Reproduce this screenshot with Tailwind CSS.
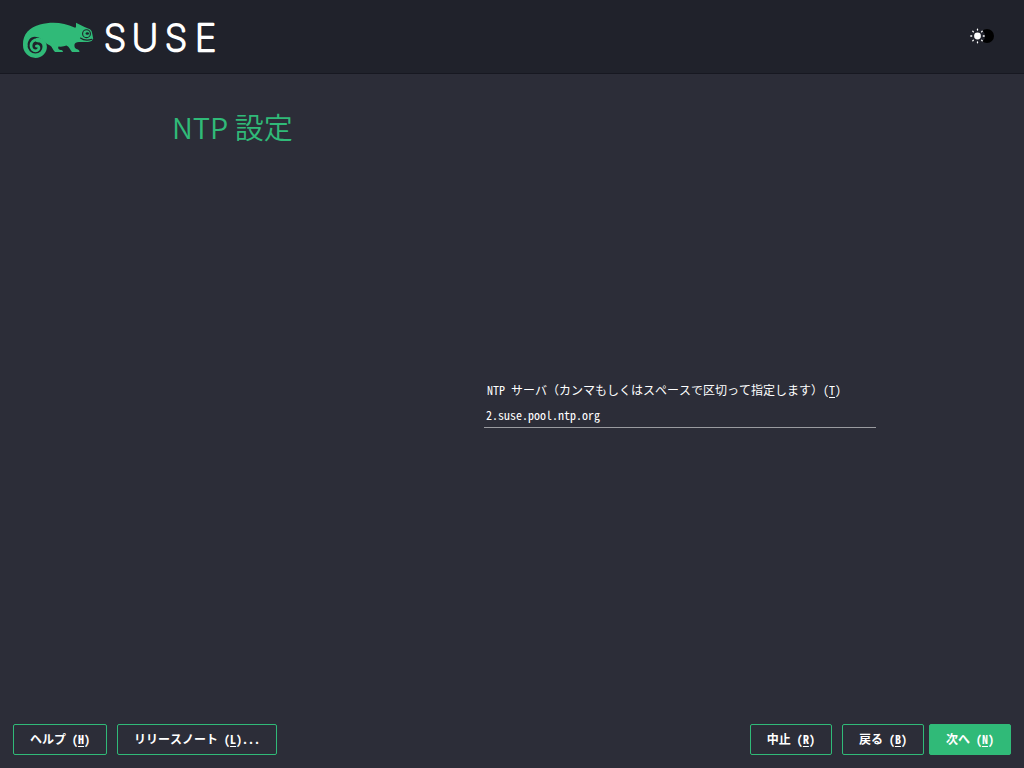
<!DOCTYPE html>
<html lang="ja">
<head>
<meta charset="utf-8">
<meta name="viewport" content="width=device-width, initial-scale=1">
<title>NTP 設定</title>
<script src="https://cdn.jsdelivr.net/npm/@tailwindcss/browser@4"></script>
</head>
<body class="flex min-h-screen flex-col bg-[#2c2d38] font-['Noto_Sans_Mono_CJK_JP','Noto_Sans_CJK_JP',sans-serif] text-xs text-white [font-feature-settings:'hwid']">
<header class="flex h-[74px] items-center justify-between border-b border-[#171821] bg-[#20222b] pr-[30px] pl-5">
  <svg role="img" aria-label="SUSE" class="mt-1.5 h-11 w-[200px] overflow-visible" viewBox="20 18 200 44">
    <path fill="#30ba78" d="M23 45C22.500 34 30 27 40 24.500C52 21.500 64 22.500 74.500 27.500Q76 28 76 26.500L76 22.700L84.500 27L90 29.300Q92 30.500 92.300 34L93.200 38.500Q92.500 41.500 88 42L79 42Q75 42 74.500 44.500C74 48 76 49 78 49.500Q79.500 50 79.500 52L72 52C70 50 69.500 47 66.500 45.500Q63 47 58.500 46.500C57.500 48.500 59 50 61.500 50Q63 50.500 63 52L55 52C52.500 50 52.500 47 50 45.500C46 44 44 40 38 37.300C31 35 27.500 40 27.500 46Z"/>
    <path fill="none" stroke="#30ba78" stroke-width="4.400" stroke-linecap="round" d="M25.200 45C25.200 51.500 30 55.700 35.500 55.700C41 55.700 44.700 51.500 44.700 46.800C44.700 42.300 41.500 40 37.700 40"/>
    <path fill="none" stroke="#30ba78" stroke-width="2.800" stroke-linecap="round" d="M38.500 39.800C33.500 39.300 31 42.300 31 45.700C31 49 33.300 50.800 35.600 50.800C38 50.800 39.300 49 38.800 47.200C38.400 45.900 37.200 45.600 36.400 46.100"/>
    <path fill="none" stroke="#20222b" stroke-width="1.100" stroke-linecap="round" d="M80.500 38Q85 41.500 92 39.300"/>
    <circle cx="86.500" cy="33.700" r="3.900" fill="none" stroke="#20222b" stroke-width="1.100"/>
    <ellipse cx="87.300" cy="33.500" rx="1.700" ry="1.200" fill="#20222b"/>
    <text y="51" x="104 132 165 195" fill="#fff" stroke="#fff" stroke-width="2.600" stroke-linejoin="round" class="font-['Inter'] text-[36px] font-thin">SUSE</text>
  </svg>
  <button type="button" aria-label="テーマの切り替え" class="mb-px">
    <svg class="h-4 w-6" viewBox="0 0 24 16">
      <circle cx="17" cy="8" r="7" fill="#000"/>
      <circle cx="7.500" cy="8" r="7.500" fill="#20222b"/>
      <circle cx="7.500" cy="8" r="3.400" fill="#fff"/>
      <path stroke="#fff" stroke-width="1.300" stroke-linecap="round" d="M7.500 1.200v.8M7.500 14v.8M.8 8h.9M13.300 8h.9M2.800 3.300l.6.600M11.600 12.100l.6.600M2.800 12.700l.6-.6M11.600 3.900l.6-.6"/>
    </svg>
  </button>
</header>
<main class="flex grow flex-col px-[148px]">
  <h1 class="mt-[30px] ml-6 font-['Noto_Sans_CJK_JP',sans-serif] text-[29px] leading-11 font-[350] text-[#30ba78] [font-feature-settings:normal]">NTP 設定</h1>
  <form class="mt-[230px] ml-auto flex w-[392px] flex-col">
    <label for="ntp" class="ml-[3px] leading-6">NTP <span class="[font-feature-settings:normal]">サーバ（カンマもしくはスペースで区切って指定します）</span>(<u class="underline-offset-2">T</u>)</label>
    <input id="ntp" type="text" value="2.suse.pool.ntp.org" class="h-[26px] border-b border-[#9a9ba0] bg-transparent pb-px pl-0.5 outline-none">
  </form>
</main>
<footer class="flex justify-between px-[13px] pb-[13px] font-bold">
  <div class="flex gap-2.5">
    <button type="button" class="h-[31px] rounded-xs border border-[#30ba78] px-4 pb-0.5">ヘルプ (<u class="underline-offset-2">H</u>)</button>
    <button type="button" class="h-[31px] rounded-xs border border-[#30ba78] px-4 pb-0.5">リリースノート (<u class="underline-offset-2">L</u>)...</button>
  </div>
  <div class="flex">
    <button type="button" class="mr-2.5 h-[31px] rounded-xs border border-[#30ba78] px-4 pb-0.5">中止 (<u class="underline-offset-2">R</u>)</button>
    <button type="button" class="mr-[5px] h-[31px] rounded-xs border border-[#30ba78] px-4 pb-0.5">戻る (<u class="underline-offset-2">B</u>)</button>
    <button type="submit" class="h-[31px] rounded-xs border border-[#30ba78] bg-[#30ba78] px-4 pb-0.5">次へ (<u class="underline-offset-2">N</u>)</button>
  </div>
</footer>
</body>
</html>
